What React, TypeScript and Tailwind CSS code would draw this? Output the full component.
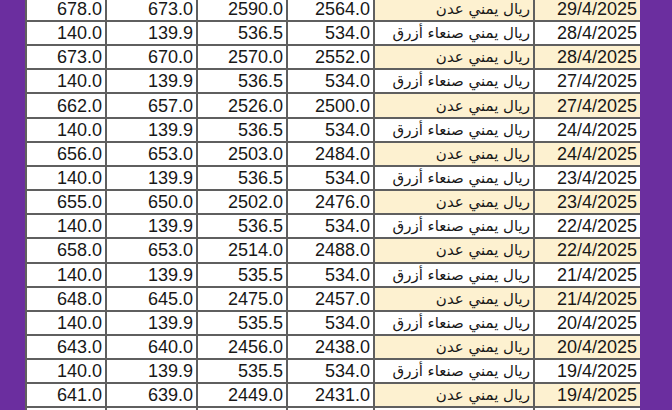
import React from "react";

type Row = [string, string, string, string, string, string, boolean];

const ADEN = "ريال يمني عدن";
const SANAA = "ريال يمني صنعاء أزرق";

const rows: Row[] = [
  ["678.0", "673.0", "2590.0", "2564.0", ADEN, "29/4/2025", true],
  ["140.0", "139.9", "536.5", "534.0", SANAA, "28/4/2025", false],
  ["673.0", "670.0", "2570.0", "2552.0", ADEN, "28/4/2025", true],
  ["140.0", "139.9", "536.5", "534.0", SANAA, "27/4/2025", false],
  ["662.0", "657.0", "2526.0", "2500.0", ADEN, "27/4/2025", true],
  ["140.0", "139.9", "536.5", "534.0", SANAA, "24/4/2025", false],
  ["656.0", "653.0", "2503.0", "2484.0", ADEN, "24/4/2025", true],
  ["140.0", "139.9", "536.5", "534.0", SANAA, "23/4/2025", false],
  ["655.0", "650.0", "2502.0", "2476.0", ADEN, "23/4/2025", true],
  ["140.0", "139.9", "536.5", "534.0", SANAA, "22/4/2025", false],
  ["658.0", "653.0", "2514.0", "2488.0", ADEN, "22/4/2025", true],
  ["140.0", "139.9", "535.5", "534.0", SANAA, "21/4/2025", false],
  ["648.0", "645.0", "2475.0", "2457.0", ADEN, "21/4/2025", true],
  ["140.0", "139.9", "535.5", "534.0", SANAA, "20/4/2025", false],
  ["643.0", "640.0", "2456.0", "2438.0", ADEN, "20/4/2025", true],
  ["140.0", "139.9", "535.5", "534.0", SANAA, "19/4/2025", false],
  ["641.0", "639.0", "2449.0", "2431.0", ADEN, "19/4/2025", true],
  ["", "", "", "", "", "", false],
];

function Cell({ children, yellow, arabic }: { children?: React.ReactNode; yellow?: boolean; arabic?: boolean }) {
  return (
    <div
      dir={arabic ? "rtl" : "ltr"}
      className={
        "flex items-center border-r-2 border-b-2 border-[#5f5f5f] px-[3px] overflow-hidden whitespace-nowrap " +
        (arabic ? "justify-start " : "justify-end ") +
        (yellow ? "bg-[#fdf1d0]" : "bg-white")
      }
    >
      {children}
    </div>
  );
}

export default function App() {
  return (
    <div className="flex h-[410px] w-[672px] overflow-hidden bg-[#6b2e9f] font-['Liberation_Sans','DejaVu_Sans',Arial,sans-serif] text-[18px] leading-none text-[#181818]">
      <div className="w-[25px] shrink-0 bg-[#6b2e9f]" />
      <div className="mt-[-2.2px] w-[615px] shrink-0 border-l-2 border-[#5f5f5f]">
        {rows.map((r, i) => (
          <div
            key={i}
            className="grid h-[24.17px] grid-cols-[80px_91px_90px_87px_160px_107px]"
          >
            <Cell>{r[0]}</Cell>
            <Cell>{r[1]}</Cell>
            <Cell>{r[2]}</Cell>
            <Cell>{r[3]}</Cell>
            <Cell yellow={r[6]} arabic>
              {r[4] ? (
                <span className="pt-[1px] font-['DejaVu_Sans',sans-serif] text-[15px]">{r[4]}</span>
              ) : null}
            </Cell>
            <Cell yellow={r[6]}>{r[5]}</Cell>
          </div>
        ))}
      </div>
      <div className="flex-1 bg-[#6b2e9f]" />
    </div>
  );
}
